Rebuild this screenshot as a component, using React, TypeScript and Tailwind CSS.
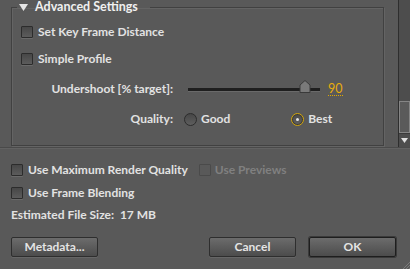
import React from "react";

const font = { fontFamily: "Lato, 'Open Sans', sans-serif" };

function Checkbox({ disabled }: { disabled?: boolean }) {
  return (
    <span
      className={
        "inline-block h-[12px] w-[12px] shrink-0 rounded-[1px] border " +
        (disabled
          ? "border-[#4a4a4a] bg-[#595959]"
          : "border-[#2c2c2c] bg-gradient-to-b from-[#474747] to-[#5c5c5c] shadow-[0_1px_0_#6a6a6a]")
      }
    />
  );
}

function Radio({ checked }: { checked?: boolean }) {
  if (checked) {
    return (
      <span className="flex h-[13px] w-[13px] shrink-0 items-center justify-center rounded-full border border-[#d4a80e] bg-[#3a3a3a]">
        <span className="flex h-[9px] w-[9px] items-center justify-center rounded-full bg-gradient-to-b from-[#4c4c4c] to-[#606060]">
          <span className="h-[3px] w-[3px] rounded-full bg-[#e6e6e6]" />
        </span>
      </span>
    );
  }
  return (
    <span className="inline-block h-[13px] w-[13px] shrink-0 rounded-full border border-[#2c2c2c] bg-gradient-to-b from-[#474747] to-[#5e5e5e]" />
  );
}

function Button({ label, primary }: { label: string; primary?: boolean }) {
  return (
    <button
      className={
        "flex h-[20px] w-[87px] items-center justify-center rounded-[2px] border bg-gradient-to-b from-[#6c6c6c] to-[#4c4c4c] text-[12px] font-bold text-[#e4e4e4] " +
        (primary
          ? "border-[#1e1e1e] shadow-[0_0_0_1px_#3a3a3a]"
          : "border-[#2e2e2e] shadow-[0_1px_0_#666]")
      }
    >
      {label}
    </button>
  );
}

export default function App() {
  return (
    <div
      className="flex h-[269px] w-[410px] flex-col overflow-hidden bg-[#595959] text-[12px] font-bold text-[#e2e2e2]"
      style={font}
    >
      {/* scrolling area */}
      <div className="flex h-[148px] shrink-0 border-b border-[#4a4a4a] shadow-[0_1px_0_#626262]">
        <div className="flex-1 pl-[11px] pr-[14px] pb-[1px]">
          <fieldset className="h-[146px] mt-0 border border-[#414141] shadow-[inset_1px_1px_0_#646464,1px_1px_0_#646464] px-0">
            <legend className="ml-[5px] flex items-center gap-[7px] px-[2px] leading-[14px]">
              <svg width="9" height="7" viewBox="0 0 9 7" className="mt-[1px]">
                <path d="M0 0 H9 L4.5 7 Z" fill="#e6e6e6" />
              </svg>
              <span className="text-[12.5px] text-[#f0f0f0]">Advanced Settings</span>
              <span className="w-[3px]" />
            </legend>
            <div className="flex flex-col pl-[9px] pt-[11px]">
              <label className="flex h-[14px] items-center gap-[5px]">
                <Checkbox />
                <span>Set Key Frame Distance</span>
              </label>
              <label className="mt-[13px] flex h-[14px] items-center gap-[5px]">
                <Checkbox />
                <span>Simple Profile</span>
              </label>
              <div className="mt-[16px] flex h-[14px] items-center">
                <span className="w-[152px] text-right">Undershoot [% target]:</span>
                <div className="relative ml-[15px] h-[3px] w-[132px] bg-[#1f1f1f] shadow-[0_1px_0_#6a6a6a]">
                  <svg
                    width="12"
                    height="13"
                    viewBox="0 0 12 13"
                    className="absolute left-[111px] top-[-8px]"
                  >
                    <path d="M6 0.5 L11 5 V12.5 H1 V5 Z" fill="#7a7a7a" stroke="#3a3a3a" />
                  </svg>
                </div>
                <span className="ml-[8px] border-b border-dotted border-[#e0a800] text-[12.5px] font-normal leading-[13px] text-[#e8ac0c]">
                  90
                </span>
              </div>
              <div className="mt-[16px] flex h-[14px] items-center">
                <span className="w-[152px] text-right">Quality:</span>
                <label className="ml-[11px] flex items-center gap-[4px]">
                  <Radio />
                  <span>Good</span>
                </label>
                <label className="ml-[61px] flex items-center gap-[4px]">
                  <Radio checked />
                  <span>Best</span>
                </label>
              </div>
            </div>
          </fieldset>
        </div>
        {/* scrollbar */}
        <div className="flex w-[12px] flex-col border-l border-[#2e2e2e] bg-[#4d4d4d]">
          <div className="flex-1" />
          <div className="h-[32px] border border-[#858585] bg-[#5a5a5a]" />
          <div className="flex h-[14px] items-center justify-center border-t border-[#3a3a3a]">
            <svg width="7" height="5" viewBox="0 0 7 5">
              <path d="M0 0 H7 L3.5 5 Z" fill="#e0e0e0" />
            </svg>
          </div>
        </div>
      </div>

      {/* options below */}
      <div className="flex flex-1 flex-col pl-[11px] pr-[14px] pt-[15px]">
        <div className="flex h-[14px] items-center">
          <label className="flex items-center gap-[5px]">
            <Checkbox />
            <span>Use Maximum Render Quality</span>
          </label>
          <label className="ml-[11px] flex items-center gap-[4px] text-[#808080]">
            <Checkbox disabled />
            <span>Use Previews</span>
          </label>
        </div>
        <label className="mt-[9px] flex h-[14px] items-center gap-[5px]">
          <Checkbox />
          <span>Use Frame Blending</span>
        </label>
        <div className="mt-[8px] flex h-[14px] items-center">
          Estimated File Size:&nbsp;&nbsp;17 MB
        </div>
        <div className="mt-[15px] flex items-center">
          <Button label="Metadata..." />
          <div className="flex-1" />
          <Button label="Cancel" />
          <div className="w-[13px]" />
          <Button label="OK" primary />
        </div>
      </div>
      <div className="relative h-0">
        <svg width="8" height="8" viewBox="0 0 8 8" className="absolute bottom-0 right-0">
          <path d="M8 1 L1 8 M8 4 L4 8 M8 7 L7 8" stroke="#7a7a7a" strokeWidth="1" />
        </svg>
      </div>
    </div>
  );
}
